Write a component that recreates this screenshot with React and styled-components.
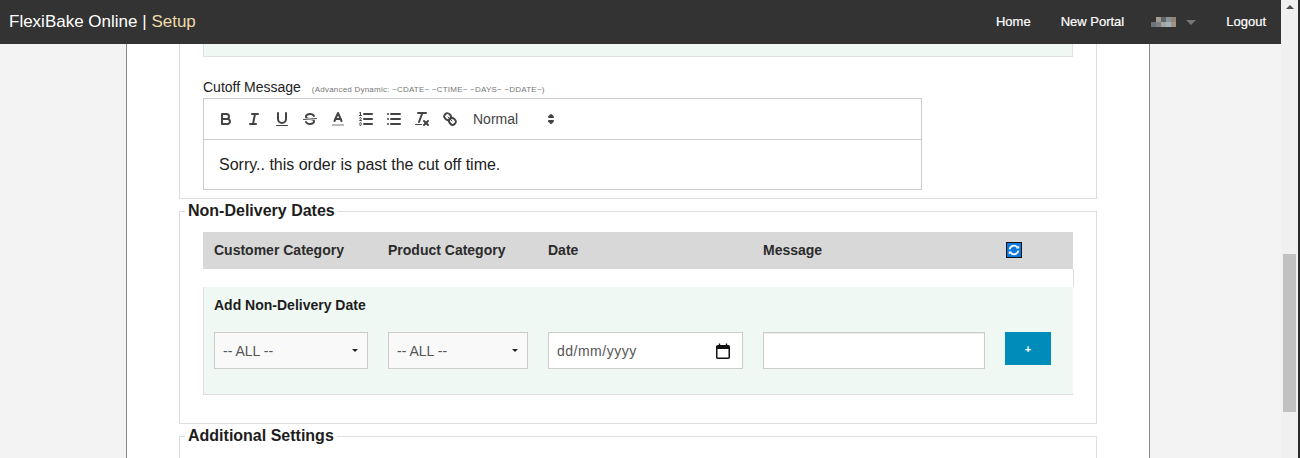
import React from "react";
import styled, { createGlobalStyle } from "styled-components";

const Global = createGlobalStyle`
  html, body { margin: 0; padding: 0; height: 458px; overflow: hidden; background: #f3f3f3; }
  * { box-sizing: border-box; }
  body { font-family: "Liberation Sans", Arial, sans-serif; color: #222; }
`;

const Shell = styled.div`
  display: flex;
  width: 1300px;
  height: 458px;
  overflow: hidden;
`;
const Viewport = styled.div`
  width: 1281px;
  height: 458px;
  display: flex;
  flex-direction: column;
  overflow: hidden;
`;
const Scrollbar = styled.div`
  width: 19px;
  height: 458px;
  background: #f0f0f0;
  border-right: 2px solid #2b2b2b;
  display: flex;
  flex-direction: column;
  align-items: center;
  padding-top: 5px;
`;
const ScrollArrow = styled.div`
  width: 0;
  height: 0;
  border-left: 4px solid transparent;
  border-right: 4px solid transparent;
  border-bottom: 4px solid #505050;
`;
const ScrollThumb = styled.div`
  width: 13px;
  height: 158px;
  background: #c1c1c1;
  margin-top: 245px;
`;

const TopBar = styled.header`
  height: 44px;
  flex: none;
  background: #333;
  display: flex;
  align-items: center;
  justify-content: space-between;
  padding: 0 15px 0 9px;
`;
const Brand = styled.div`
  font-size: 17px;
  color: #fff;
  padding-bottom: 1px;
`;
const BrandAccent = styled.span`
  color: #f0d9a8;
`;
const Nav = styled.nav`
  display: flex;
  align-items: center;
`;
const NavLink = styled.a`
  font-size: 13px;
  color: #fff;
  margin-left: ${(p) => p.$gap || 0}px;
  padding-bottom: 2px;
  -webkit-text-stroke: 0.2px #fff;
`;
const Caret = styled.span`
  width: 0;
  height: 0;
  margin-left: 10px;
  border-left: 5px solid transparent;
  border-right: 5px solid transparent;
  border-top: 5px solid #777;
`;
const UserName = styled.svg`
  display: block;
  margin-left: 27px;
`;

const Page = styled.main`
  flex: 1;
  min-height: 0;
  overflow: hidden;
  margin: 0 131px 0 126px;
  background: #fff;
  border-left: 1px solid #8a8a8a;
  border-right: 1px solid #8a8a8a;
  padding: 0 52px;
`;
const Section = styled.fieldset`
  margin: ${(p) => p.$mt || 0}px 0 0;
  padding: ${(p) => p.$pt}px 23px 0;
  border: 1px solid #ddd;
  border-top: ${(p) => (p.$open ? "none" : "1px solid #ddd")};
  height: ${(p) => p.$h}px;
  min-width: 0;
`;
const Legend = styled.legend`
  margin-left: -18px;
  padding: 0 3px 1px;
  font-size: 16px;
  line-height: 18px;
  font-weight: 700;
  color: #1d1d1d;
`;
const ClippedPanel = styled.div`
  height: 13px;
  width: 870px;
  background: #f0f8f4;
  border: 2px solid #e0e0e0;
  border-width: 0 1px 1px 1px;
`;
const FieldLabel = styled.div`
  margin-top: 21px;
  height: 18px;
  display: flex;
  align-items: baseline;
  font-size: 14px;
  line-height: 18px;
  color: #222;
`;
const Hint = styled.small`
  margin-left: 11px;
  font-size: 8px;
  color: #777;
  letter-spacing: 0.22px;
`;
const Editor = styled.div`
  width: 719px;
  height: 92px;
  margin-top: 2px;
  border: 1px solid #ccc;
`;
const Toolbar = styled.div`
  height: 41px;
  border-bottom: 1px solid #ccc;
  display: flex;
  align-items: center;
  padding-left: 8px;
`;
const ToolButton = styled.span`
  width: 28px;
  height: 24px;
  padding: 3px 5px;
  display: block;
  svg { display: block; width: 18px; height: 18px; }
`;
const Picker = styled.div`
  width: 108px;
  height: 24px;
  display: flex;
  align-items: center;
  justify-content: space-between;
  font-size: 14px;
  color: #444;
  padding-left: 9px;
  padding-right: 12px;
`;
const EditorBody = styled.div`
  padding: 15px 15px;
  font-size: 16px;
  line-height: 20px;
  color: #222;
`;

const columns = "174px 160px 215px 241px 80px";
const TableHead = styled.div`
  width: 870px;
  height: 37px;
  background: #d8d8d8;
  display: grid;
  grid-template-columns: ${columns};
  align-items: center;
  padding-left: 11px;
  padding-bottom: 1px;
  font-size: 14px;
  font-weight: 700;
  color: #2b2b2b;
`;
const RefreshCell = styled.span`
  display: flex;
  padding-left: 2px;
`;
const EmptyRow = styled.div`
  width: 871px;
  height: 18px;
  border-right: 1px solid #ddd;
`;
const AddPanel = styled.div`
  width: 870px;
  height: 108px;
  background: #f0f8f4;
  border-left: 1px solid #ddd;
  border-bottom: 1px solid #ddd;
  padding: 10px 0 0 10px;
`;
const AddTitle = styled.div`
  font-size: 14px;
  font-weight: 700;
  line-height: 16px;
  color: #1d1d1d;
`;
const AddRow = styled.div`
  display: flex;
  align-items: flex-start;
  margin-top: 19px;
`;
const SelectBox = styled.div`
  width: ${(p) => p.$w}px;
  height: 37px;
  margin-right: 20px;
  background: #f9f9f9;
  border: 1px solid #ccc;
  display: flex;
  align-items: center;
  justify-content: space-between;
  padding: 0 9px 0 8px;
  font-size: 14px;
  color: #555;
`;
const SelectCaret = styled.span`
  width: 0;
  height: 0;
  border-left: 3px solid transparent;
  border-right: 3px solid transparent;
  border-top: 3px solid #222;
`;
const DateBox = styled(SelectBox)`
  background: #fff;
  padding: 0 12px 0 8px;
  color: #555;
  letter-spacing: 0.5px;
`;
const MessageInput = styled.div`
  width: 222px;
  height: 37px;
  margin-right: 20px;
  background: #fff;
  border: 1px solid #ccc;
  box-shadow: inset 0 1px 1px rgba(0, 0, 0, 0.08);
`;
const AddButton = styled.button`
  width: 46px;
  height: 33px;
  border: none;
  padding: 0;
  background: #008cba;
  color: #fff;
  font-family: "Liberation Sans", Arial, sans-serif;
  font-size: 11px;
  font-weight: 700;
`;

const Stroke = { fill: "none", stroke: "#444", strokeWidth: 2, strokeLinecap: "round", strokeLinejoin: "round" };
const Thin = { ...Stroke, strokeWidth: 1 };
const Fill = { fill: "#444" };

const icons = [
  <g key="b" {...Stroke}>
    <path d="M5,4H9.5A2.5,2.5,0,0,1,12,6.5v0A2.5,2.5,0,0,1,9.5,9H5A0,0,0,0,1,5,9V4A0,0,0,0,1,5,4Z" />
    <path d="M5,9h5.5A2.5,2.5,0,0,1,13,11.5v0A2.5,2.5,0,0,1,10.5,14H5a0,0,0,0,1,0,0V9A0,0,0,0,1,5,9Z" />
  </g>,
  <g key="i" {...Stroke}>
    <line x1="7" x2="13" y1="4" y2="4" />
    <line x1="5" x2="11" y1="14" y2="14" />
    <line x1="8" x2="10" y1="14" y2="4" />
  </g>,
  <g key="u">
    <path {...Stroke} d="M5,3V9a4.012,4.012,0,0,0,4,4H9a4.012,4.012,0,0,0,4-4V3" />
    <rect {...Fill} height="1" rx="0.5" ry="0.5" width="12" x="3" y="15" />
  </g>,
  <g key="s">
    <line {...Thin} x1="15.5" x2="2.5" y1="8.5" y2="9.5" />
    <path {...Fill} d="M9.007,8C6.542,7.791,6,7.519,6,6.5,6,5.792,7.283,5,9,5c1.571,0,2.765.679,2.969,1.309a1,1,0,0,0,1.9-.617C13.356,4.106,11.354,3,9,3,6.2,3,4,4.538,4,6.5a3.2,3.2,0,0,0,.5,1.843Z" />
    <path {...Fill} d="M8.984,10C11.457,10.208,12,10.479,12,11.5c0,.708-1.283,1.5-3,1.5-1.571,0-2.765-.679-2.969-1.309a1,1,0,1,0-1.9.617C4.644,13.894,6.646,15,9,15c2.8,0,5-1.538,5-3.5a3.2,3.2,0,0,0-.5-1.843Z" />
  </g>,
  <g key="c">
    <line {...Stroke} stroke="#bbb" strokeLinecap="butt" x1="3" x2="15" y1="15" y2="15" />
    <polyline {...Stroke} points="5.5 11 9 3 12.5 11" />
    <line {...Stroke} x1="11.63" x2="6.38" y1="9" y2="9" />
  </g>,
  <g key="ol">
    <line {...Stroke} x1="7" x2="15" y1="4" y2="4" />
    <line {...Stroke} x1="7" x2="15" y1="9" y2="9" />
    <line {...Stroke} x1="7" x2="15" y1="14" y2="14" />
    <line {...Thin} x1="2.5" x2="4.5" y1="5.5" y2="5.5" />
    <path {...Fill} d="M3.5,6A0.5,0.5,0,0,1,3,5.5V3.085l-0.276.138A0.5,0.5,0,0,1,2.053,3c-0.124-.247-0.023-0.324.224-0.447l1-.5A0.5,0.5,0,0,1,4,2.5v3A0.5,0.5,0,0,1,3.5,6Z" />
    <path {...Thin} d="M4.5,10.5h-2c0-.234,1.85-1.076,1.85-2.234A0.959,0.959,0,0,0,2.5,8.156" />
    <path {...Thin} d="M2.5,14.846a0.959,0.959,0,0,0,1.85-.109A0.7,0.7,0,0,0,3.75,14a0.688,0.688,0,0,0,.6-0.736,0.959,0.959,0,0,0-1.85-.109" />
  </g>,
  <g key="ul" {...Stroke}>
    <line x1="6" x2="15" y1="4" y2="4" />
    <line x1="6" x2="15" y1="9" y2="9" />
    <line x1="6" x2="15" y1="14" y2="14" />
    <line x1="3" x2="3" y1="4" y2="4" />
    <line x1="3" x2="3" y1="9" y2="9" />
    <line x1="3" x2="3" y1="14" y2="14" />
  </g>,
  <g key="x">
    <line {...Stroke} x1="5" x2="13" y1="3" y2="3" />
    <line {...Stroke} x1="6" x2="9.35" y1="12" y2="3" />
    <line {...Stroke} x1="11" x2="15" y1="11" y2="15" />
    <line {...Stroke} x1="15" x2="11" y1="11" y2="15" />
    <rect {...Fill} height="1" rx="0.5" ry="0.5" width="7" x="2" y="14" />
  </g>,
  <g key="l">
    <line {...Thin} x1="7" x2="11" y1="7" y2="11" />
    <path {...Stroke} d="M8.9,4.577a3.476,3.476,0,0,1,.36,4.679A3.476,3.476,0,0,1,4.577,8.9C3.185,7.5,2.035,6.4,4.217,4.217S7.5,3.185,8.9,4.577Z" />
    <path {...Stroke} d="M13.423,9.1a3.476,3.476,0,0,0-4.679-.36,3.476,3.476,0,0,0,.36,4.679c1.392,1.392,2.5,2.542,4.679.36S14.815,10.5,13.423,9.1Z" />
  </g>,
];

const mosaic = [
  ["#333", "#a39a90", "#5d666c", "#8b9298", "#8f8676"],
  ["#6c7277", "#7d8084", "#a8a29c", "#9fb3bc", "#a39384"],
];

function Mosaic() {
  return (
    <UserName width="25" height="10" viewBox="0 0 25 10" aria-hidden="true">
      {mosaic.map((row, y) =>
        row.map((c, x) => <rect key={`${x}-${y}`} x={x * 5} y={y * 5} width="5" height="5" fill={c} />)
      )}
    </UserName>
  );
}

const Refresh = () => (
  <svg width="16" height="16" viewBox="0 0 16 16" aria-hidden="true">
    <rect x="0.5" y="0.5" width="15" height="15" fill="#0b78dc" stroke="#111" />
    <path d="M3.6 7.3A4.4 4.4 0 0 1 11.4 5.4" fill="none" stroke="#fff" strokeWidth="1.8" />
    <path d="M12.4 8.7A4.4 4.4 0 0 1 4.6 10.6" fill="none" stroke="#fff" strokeWidth="1.8" />
    <path d="M10 6.6h3.2V3.4zM6 9.4H2.8v3.2z" fill="#fff" />
  </svg>
);

const Calendar = () => (
  <svg width="14" height="16" viewBox="0 0 14 16" aria-hidden="true">
    <rect x="0.75" y="2.75" width="12.5" height="12.5" rx="1" fill="none" stroke="#111" strokeWidth="1.5" />
    <path d="M1 3h12v3H1z" fill="#111" />
    <path d="M3.5 0.5v2.5M10.5 0.5v2.5" stroke="#111" strokeWidth="1.4" />
  </svg>
);

const PickerArrows = () => (
  <svg width="18" height="18" viewBox="0 0 18 18" aria-hidden="true">
    <polygon points="7 11 9 13 11 11 7 11" fill="#444" stroke="#444" strokeWidth="2" strokeLinejoin="round" />
    <polygon points="7 7 9 5 11 7 7 7" fill="#444" stroke="#444" strokeWidth="2" strokeLinejoin="round" />
  </svg>
);

export default function App() {
  return (
    <Shell>
      <Global />
      <Viewport>
        <TopBar>
          <Brand>
            FlexiBake Online | <BrandAccent>Setup</BrandAccent>
          </Brand>
          <Nav>
            <NavLink>Home</NavLink>
            <NavLink $gap={30}>New Portal</NavLink>
            <Mosaic />
            <Caret />
            <NavLink $gap={30}>Logout</NavLink>
          </Nav>
        </TopBar>
        <Page>
          <Section $open $pt={0} $h={155}>
            <ClippedPanel />
            <FieldLabel>
              Cutoff Message
              <Hint>(Advanced Dynamic: ~CDATE~ ~CTIME~ ~DAYS~ ~DDATE~)</Hint>
            </FieldLabel>
            <Editor>
              <Toolbar>
                {icons.map((ic) => (
                  <ToolButton key={ic.key}>
                    <svg viewBox="0 0 18 18" aria-hidden="true">{ic}</svg>
                  </ToolButton>
                ))}
                <Picker>
                  Normal
                  <PickerArrows />
                </Picker>
              </Toolbar>
              <EditorBody>Sorry.. this order is past the cut off time.</EditorBody>
            </Editor>
          </Section>
          <Section $mt={3} $pt={11} $h={222}>
            <Legend>Non-Delivery Dates</Legend>
            <TableHead>
              <span>Customer Category</span>
              <span>Product Category</span>
              <span>Date</span>
              <span>Message</span>
              <RefreshCell>
                <Refresh />
              </RefreshCell>
            </TableHead>
            <EmptyRow />
            <AddPanel>
              <AddTitle>Add Non-Delivery Date</AddTitle>
              <AddRow>
                <SelectBox $w={154}>
                  -- ALL --
                  <SelectCaret />
                </SelectBox>
                <SelectBox $w={140}>
                  -- ALL --
                  <SelectCaret />
                </SelectBox>
                <DateBox $w={195}>
                  dd/mm/yyyy
                  <Calendar />
                </DateBox>
                <MessageInput />
                <AddButton>+</AddButton>
              </AddRow>
            </AddPanel>
          </Section>
          <Section $mt={3} $pt={11} $h={100}>
            <Legend>Additional Settings</Legend>
          </Section>
        </Page>
      </Viewport>
      <Scrollbar>
        <ScrollArrow />
        <ScrollThumb />
      </Scrollbar>
    </Shell>
  );
}
